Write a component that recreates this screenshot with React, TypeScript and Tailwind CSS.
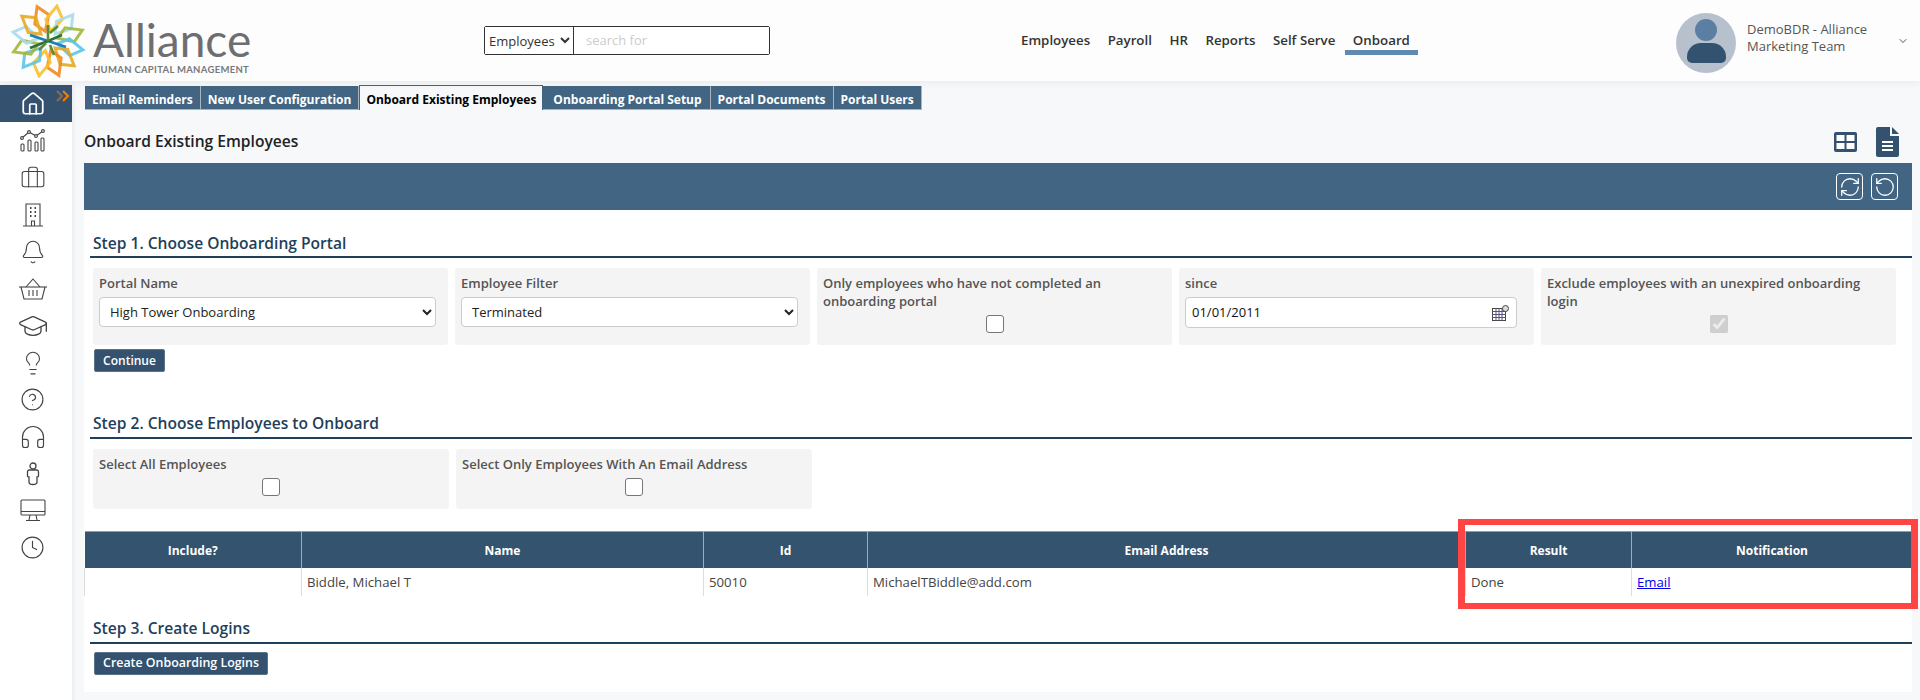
import React from 'react';
import { House, Briefcase, Bell, GraduationCap, Lightbulb, CircleHelp, Headphones, Clock, ChevronDown, RefreshCw, RotateCcw } from 'lucide-react';

const petals: [number, string][] = [
  [-16, '#f08a24'], [16, '#fbc02d'], [45, '#a8dcec'], [74, '#a3b83a'], [106, '#5cc4e8'], [135, '#e8a823'],
  [164, '#f08a24'], [196, '#fbc02d'], [225, '#5cc4e8'], [254, '#a3b83a'], [286, '#a8dcec'], [315, '#e8a823'],
];

function Logo() {
  return (
    <svg width="78" height="74" viewBox="-39 -37 78 74" className="shrink-0">
      {petals.map(([a, c]) => (
        <polygon key={a} points="0,-10 -8,-20 -1,-36 8,-25" fill="none" stroke={c} strokeWidth="3" strokeOpacity="0.9" transform={`rotate(${a})`} />
      ))}
      <path d="M-18 -6 L-9 -3 L0 0 L9 3 L18 6" stroke="#1d7fb8" strokeWidth="2.6" fill="none" />
      <path d="M-18 7 L0 0 L14 -6" stroke="#2f6f3a" strokeWidth="2.6" fill="none" />
      <path d="M0 -16 V0 M-9 9 L-2 2 M10 -15 L2 -8 M6 14 L2 4" stroke="#5a8f34" strokeWidth="2.6" fill="none" />
    </svg>
  );
}

function ChartIcon() {
  return (
    <svg width="26" height="24" viewBox="0 0 26 24" fill="none" stroke="#444" strokeWidth="1.1">
      <rect x="1" y="15" width="3" height="7" rx="1" />
      <rect x="8" y="11" width="3" height="11" rx="1" />
      <rect x="15" y="13" width="3" height="9" rx="1" />
      <rect x="21" y="9" width="3" height="13" rx="1" />
      <path d="M2 9 L9 3 L16 7 L23 2" />
      <circle cx="2" cy="9" r="1.4" fill="#fff" />
      <circle cx="9" cy="3" r="1.4" fill="#fff" />
      <circle cx="16" cy="7" r="1.4" fill="#fff" />
      <circle cx="23" cy="2" r="1.4" fill="#fff" />
    </svg>
  );
}

function BuildingIcon() {
  return (
    <svg width="22" height="24" viewBox="0 0 22 24" fill="none" stroke="#444" strokeWidth="1.1">
      <path d="M4 23 V1 H18 V23 M1 23 H21" />
      <path d="M9.5 23 V18 H12.5 V23" />
      <path d="M8 5 H9.5 M12.5 5 H14 M8 9 H9.5 M12.5 9 H14 M8 13 H9.5 M12.5 13 H14" strokeWidth="2" />
    </svg>
  );
}

function BasketIcon() {
  return (
    <svg width="30" height="22" viewBox="0 0 30 22" fill="none" stroke="#444" strokeWidth="1.1">
      <path d="M1 9 H29" />
      <path d="M3 9 L6 21 H24 L27 9" />
      <path d="M8 9 L15 1 L22 9" />
      <path d="M11 12 V18 M15 12 V18 M19 12 V18" />
    </svg>
  );
}

function PersonIcon() {
  return (
    <svg width="14" height="24" viewBox="0 0 14 24" fill="none" stroke="#444" strokeWidth="1.3">
      <circle cx="7" cy="4" r="3" />
      <path d="M3 8 H11 Q12.5 8 12.5 10 V14 Q12.5 15 11 15 V20 Q11 22.5 7 22.5 Q3 22.5 3 20 V15 Q1.5 15 1.5 14 V10 Q1.5 8 3 8 Z" />
    </svg>
  );
}

function MonitorIcon() {
  return (
    <svg width="26" height="23" viewBox="0 0 26 23" fill="none" stroke="#444" strokeWidth="1.1">
      <rect x="1" y="1" width="24" height="15" rx="1" />
      <path d="M1 12.5 H25 M10 16 L9 21 M16 16 L17 21 M6 21.5 H20" />
    </svg>
  );
}

function NavIcon({ children, active }: { children: React.ReactNode; active?: boolean }) {
  return (
    <div className={`relative h-[37px] flex items-center justify-center pr-[7px] ${active ? 'bg-[#34526f] text-white' : 'text-[#444]'}`}>
      {children}
    </div>
  );
}

function Step({ title, spacing }: { title: string; spacing: string }) {
  return (
    <div className={`ml-[6px] border-b-2 border-[#1f3f5b] pl-[3px] text-[15.6px] leading-[20px] font-semibold text-[#1f3f5b] ${spacing}`}>
      {title}
    </div>
  );
}

function Panel({ label, children, className }: { label: string; children?: React.ReactNode; className?: string }) {
  return (
    <div className={`bg-[#f4f4f4] rounded-[3px] px-[6px] pt-[6px] ${className ?? ''}`}>
      <div className="text-[13px] leading-[18px] font-semibold text-[#555]">{label}</div>
      {children}
    </div>
  );
}

const tabs = ['Email Reminders', 'New User Configuration', 'Onboard Existing Employees', 'Onboarding Portal Setup', 'Portal Documents', 'Portal Users'];
const navLinks = ['Employees', 'Payroll', 'HR', 'Reports', 'Self Serve', 'Onboard'];

export default function App() {
  return (
    <div className="h-[700px] overflow-hidden bg-[#f7f8fa] font-['Open_Sans',sans-serif] text-[13px]">
      <header className="h-[81px] bg-[#fdfdfd] shadow-[0_2px_8px_rgba(0,0,0,0.06)] flex items-center relative">
        <div className="w-[484px] flex items-center pl-[9px] shrink-0">
          <Logo />
          <div className="ml-[6px] w-[160px] pt-[13px]">
            <div className="font-['Lato',sans-serif] text-[46px] leading-[44px] text-[#6d6e71]">Alliance</div>
            <div className="font-['Lato',sans-serif] mt-[2px] text-[9.5px] leading-[12px] tracking-[0.3px] font-bold text-[#77787b] whitespace-nowrap">HUMAN CAPITAL MANAGEMENT</div>
          </div>
        </div>
        <div className="w-[286px] h-[29px] border border-[#333] rounded-[2px] flex shrink-0">
          <select className="w-[89px] border-r border-[#333] text-[13px] text-[#333] bg-white">
            <option>Employees</option>
          </select>
          <input placeholder="search for" className="flex-1 min-w-0 px-[12px] text-[13px] bg-white placeholder:text-[#ccc]" />
        </div>
        <nav className="ml-[251px] flex gap-[17.5px] h-[29px] font-semibold text-[#333] text-[13.3px] leading-[29px]">
          {navLinks.map((n) => (
            <span key={n} className={n === 'Onboard' ? 'relative' : ''}>
              {n}
              {n === 'Onboard' && <span className="absolute left-[-8px] right-[-8px] top-[24px] h-[5px] bg-[#5f8bb0]" />}
            </span>
          ))}
        </nav>
        <div className="ml-auto flex items-center">
          <div className="mt-[5px] w-[60px] h-[60px] rounded-full bg-[#b7c1ce] relative overflow-hidden">
            <div className="absolute left-[19px] top-[6px] w-[22px] h-[22px] rounded-full bg-[#5b7fa3]" />
            <div className="absolute left-[11px] top-[30px] w-[39px] h-[20px] rounded-t-[14px] rounded-b-[5px] bg-[#33526f]" />
          </div>
          <div className="ml-[11px] w-[146px] text-[13px] leading-[17px] text-[#555] mt-[-5px]">DemoBDR - Alliance Marketing Team</div>
          <ChevronDown size={12} className="text-[#555] ml-[4px] mr-[11px]" />
        </div>
      </header>

      <div className="flex mt-[4px]">
        <aside className="w-[72px] h-[620px] bg-white shadow-[2px_0_4px_rgba(0,0,0,0.05)] shrink-0">
          <NavIcon active>
            <House size={26} strokeWidth={1.6} />
            <svg width="14" height="12" viewBox="0 0 14 12" fill="none" strokeWidth="2.2" className="absolute left-[56px] top-[5px]">
              <path d="M1 1 L6 6 L1 11" stroke="#8a6a4a" />
              <path d="M7 1 L12 6 L7 11" stroke="#f57c00" />
            </svg>
          </NavIcon>
          <NavIcon><ChartIcon /></NavIcon>
          <NavIcon><Briefcase size={26} strokeWidth={1} /></NavIcon>
          <NavIcon><BuildingIcon /></NavIcon>
          <NavIcon><Bell size={26} strokeWidth={1} /></NavIcon>
          <NavIcon><BasketIcon /></NavIcon>
          <NavIcon><GraduationCap size={32} strokeWidth={1} /></NavIcon>
          <NavIcon><Lightbulb size={26} strokeWidth={1} /></NavIcon>
          <NavIcon><CircleHelp size={25} strokeWidth={1.1} /></NavIcon>
          <NavIcon><Headphones size={28} strokeWidth={1} /></NavIcon>
          <NavIcon><PersonIcon /></NavIcon>
          <NavIcon><MonitorIcon /></NavIcon>
          <NavIcon><Clock size={25} strokeWidth={1.1} /></NavIcon>
        </aside>

        <main className="ml-[12px] w-[1828px]">
          <div className="flex pl-[1px] h-[25px] items-end">
            {tabs.map((t) => (
              <div
                key={t}
                className={
                  t === 'Onboard Existing Employees'
                    ? 'h-[25px] px-[6px] leading-[28px] text-[12px] font-bold text-black bg-[#f7f8fa] border-x border-t border-[#416583] whitespace-nowrap'
                    : t === 'Onboarding Portal Setup'
                      ? 'h-[24px] pl-[10px] pr-[8px] leading-[27px] text-[12px] font-bold text-white bg-[#416583] border-r border-b border-[#aab4bd] whitespace-nowrap'
                      : 'h-[24px] px-[7px] leading-[27px] text-[12px] font-bold text-white bg-[#416583] border-r border-b border-[#aab4bd] whitespace-nowrap'
                }
              >
                {t}
              </div>
            ))}
          </div>

          <div className="h-[53px] pt-[10px] flex items-center justify-between">
            <h1 className="text-[15.6px] font-semibold text-[#222]">Onboard Existing Employees</h1>
            <div className="flex items-center gap-[19px] mr-[13px]">
              <svg width="23" height="20" viewBox="0 0 23 20">
                <rect width="23" height="20" rx="2" fill="#34526f" />
                <rect x="2.5" y="3" width="8" height="6" fill="#fff" />
                <rect x="12.5" y="3" width="8" height="6" fill="#fff" />
                <rect x="2.5" y="11" width="8" height="6" fill="#fff" />
                <rect x="12.5" y="11" width="8" height="6" fill="#fff" />
              </svg>
              <svg width="23" height="30" viewBox="0 0 23 30">
                <path d="M2 0 H14 V9 H23 V28 Q23 30 21 30 H2 Q0 30 0 28 V2 Q0 0 2 0 Z" fill="#34526f" />
                <path d="M16 0 L23 7 H16 Z" fill="#34526f" />
                <path d="M6 15 H17 M6 19 H17 M6 23 H17" stroke="#fff" strokeWidth="2" />
              </svg>
            </div>
          </div>

          <div className="h-[47px] bg-[#416583] flex items-center justify-end gap-[8px] pr-[14px]">
            <div className="w-[27px] h-[27px] border border-white rounded-[4px] flex items-center justify-center text-white">
              <RefreshCw size={22} strokeWidth={1.4} />
            </div>
            <div className="w-[27px] h-[27px] border border-white rounded-[4px] flex items-center justify-center text-white">
              <RotateCcw size={22} strokeWidth={1.4} />
            </div>
          </div>

          <div className="bg-white h-[482px]">
            <Step title="Step 1. Choose Onboarding Portal" spacing="pt-[23px] pb-[3px]" />
            <div className="flex gap-[7px] mt-[10px] ml-[9px] mr-[16px] h-[77px]">
              <Panel label="Portal Name" className="flex-1">
                <select className="mt-[5px] w-[337px] h-[30px] border border-[#ccc] rounded-[4px] bg-white text-[13px] text-[#222] px-[6px]">
                  <option>High Tower Onboarding</option>
                </select>
              </Panel>
              <Panel label="Employee Filter" className="flex-1">
                <select className="mt-[5px] w-[337px] h-[30px] border border-[#ccc] rounded-[4px] bg-white text-[13px] text-[#222] px-[6px]">
                  <option>Terminated</option>
                </select>
              </Panel>
              <Panel label="Only employees who have not completed an onboarding portal" className="flex-1">
                <div className="flex justify-center mt-[5px]">
                  <input type="checkbox" className="appearance-none w-[18px] h-[18px] rounded-[3px] border border-[#767676] bg-white" />
                </div>
              </Panel>
              <Panel label="since" className="flex-1">
                <div className="mt-[5px] mr-[11px] h-[31px] border border-[#ccc] rounded-[4px] bg-white flex items-center justify-between px-[6px]">
                  <span className="text-[13px] text-[#111]">01/01/2011</span>
                  <svg width="17" height="16" viewBox="0 0 17 16" className="mr-[1px]">
                    <rect x="0.5" y="3.5" width="13" height="12" fill="#fff" stroke="#444" />
                    <path d="M0 6.5 H14 M0 9.5 H14 M0 12.5 H14 M4 3 V16 M7 3 V16 M10 3 V16" stroke="#5a5080" strokeWidth="1" />
                    <circle cx="13.5" cy="3.5" r="3" fill="#ddd" stroke="#444" />
                  </svg>
                </div>
              </Panel>
              <Panel label="Exclude employees with an unexpired onboarding login" className="flex-1">
                <div className="flex justify-center mt-[5px]">
                  <input type="checkbox" checked disabled readOnly className="w-[18px] h-[18px]" />
                </div>
              </Panel>
            </div>
            <button className="ml-[10px] mt-[4px] h-[23px] w-[71px] bg-[#34526f] border border-[#5c7286] rounded-[2px] text-white text-[12px] font-semibold block">Continue</button>

            <Step title="Step 2. Choose Employees to Onboard" spacing="pt-[41px] pb-[4px]" />
            <div className="flex gap-[7px] mt-[10px] ml-[9px] h-[60px]">
              <Panel label="Select All Employees" className="w-[356px]">
                <div className="flex justify-center mt-[5px]">
                  <input type="checkbox" className="appearance-none w-[18px] h-[18px] rounded-[3px] border border-[#767676] bg-white" />
                </div>
              </Panel>
              <Panel label="Select Only Employees With An Email Address" className="w-[356px]">
                <div className="flex justify-center mt-[5px]">
                  <input type="checkbox" className="appearance-none w-[18px] h-[18px] rounded-[3px] border border-[#767676] bg-white" />
                </div>
              </Panel>
            </div>

            <div className="relative mt-[22px]">
              <table className="w-[1828px] table-fixed border-collapse">
                <thead>
                  <tr className="h-[36px] bg-[#33536f] text-white text-[12px] border-t border-[#999]">
                    <th className="w-[217px] font-bold pt-[3px]">Include?</th>
                    <th className="w-[402px] font-bold border-l border-[#aaa] pt-[3px]">Name</th>
                    <th className="w-[164px] font-bold border-l border-[#aaa] pt-[3px]">Id</th>
                    <th className="w-[598px] font-bold border-l border-[#aaa] pt-[3px]">Email Address</th>
                    <th className="w-[166px] font-bold border-l border-[#aaa] pt-[3px]">Result</th>
                    <th className="font-bold border-l border-[#aaa] pt-[3px]">Notification</th>
                  </tr>
                </thead>
                <tbody>
                  <tr className="h-[28px] text-[13.2px] text-[#444]">
                    <td className="border-l border-[#ddd]"></td>
                    <td className="border-l border-[#ddd] pl-[5px] pt-[3px]">Biddle, Michael T</td>
                    <td className="border-l border-[#ddd] pl-[5px] pt-[3px]">50010</td>
                    <td className="border-l border-[#ddd] pl-[5px] pt-[3px]">MichaelTBiddle@add.com</td>
                    <td className="border-l border-[#ddd] pl-[5px] pt-[3px]">Done</td>
                    <td className="border-l border-[#ddd] pl-[5px] pt-[3px]"><a href="#" className="text-[#0000ee] underline">Email</a></td>
                  </tr>
                </tbody>
              </table>
              <div className="absolute left-[1374px] top-[-12px] w-[460px] h-[90px] border-x-[7px] border-y-[6px] border-[#ff4444] pointer-events-none" />
            </div>

            <Step title="Step 3. Create Logins" spacing="pt-[22px] pb-[4px]" />
            <button className="ml-[10px] mt-[8px] h-[23px] w-[174px] bg-[#34526f] border border-[#5c7286] rounded-[2px] text-white text-[12.4px] font-semibold block">Create Onboarding Logins</button>
          </div>
        </main>
      </div>
    </div>
  );
}
